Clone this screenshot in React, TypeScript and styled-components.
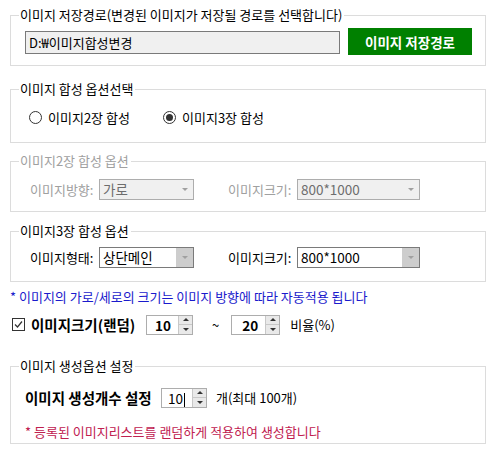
import React from "react"
import styled, { createGlobalStyle } from "styled-components"

const GlobalStyle = createGlobalStyle`
  body {
    margin: 0;
    background: #fff;
    font-family: "Noto Sans CJK KR", "Noto Sans", sans-serif;
    font-size: 13px;
    color: #000;
  }
`

const Page = styled.div`
  width: 493px;
  height: 449px;
  padding: 0 7px 0 10px;
  box-sizing: border-box;
  overflow: hidden;
`

const Group = styled.fieldset<{ $top?: number }>`
  margin: ${(p) => p.$top ?? 0}px 0 0 0;
  padding: 0;
  border: 1px solid #dcdcdc;
  min-width: 0;
`

const GroupBody = styled.div<{ $pt: number; $pb: number; $pl?: number }>`
  padding: ${(p) => p.$pt}px 8px ${(p) => p.$pb}px ${(p) => p.$pl ?? 14}px;
`

const Legend = styled.legend<{ $disabled?: boolean }>`
  margin-left: 8px;
  padding: 0 2px 0 1px;
  height: 16px;
  line-height: 16px;
  color: ${(p) => (p.$disabled ? "#a0a0a0" : "#000")};
`

const Row = styled.div<{ $gap?: number; $top?: number }>`
  display: flex;
  align-items: center;
  gap: ${(p) => p.$gap ?? 0}px;
  margin-top: ${(p) => p.$top ?? 0}px;
`

const PathInput = styled.div`
  width: 315px;
  height: 23px;
  box-sizing: border-box;
  border: 1px solid #7a7a7a;
  background: #f0f0f0;
  padding-left: 3px;
  display: flex;
  align-items: center;
  margin-top: 2px;
`

const GreenButton = styled.button`
  width: 124px;
  height: 27px;
  border: none;
  background: #008000;
  color: #fff;
  font: inherit;
  font-weight: bold;
  font-size: 13.5px;
  padding: 0;
`

const Radio = styled.label<{ $width?: number }>`
  display: flex;
  align-items: center;
  gap: 6px;
  width: ${(p) => p.$width ?? 0}px;
  height: 16px;
`

const RadioDot = styled.span<{ $on?: boolean }>`
  width: 13px;
  height: 13px;
  box-sizing: border-box;
  border: 1px solid #333;
  border-radius: 50%;
  display: flex;
  align-items: center;
  justify-content: center;
  &::after {
    content: "";
    width: 7px;
    height: 7px;
    border-radius: 50%;
    background: ${(p) => (p.$on ? "#333" : "transparent")};
  }
`

const FieldLabel = styled.span<{ $disabled?: boolean; $width: number }>`
  width: ${(p) => p.$width}px;
  flex: none;
  color: ${(p) => (p.$disabled ? "#a0a0a0" : "#000")};
`

const Select = styled.div<{ $disabled?: boolean; $width: number }>`
  width: ${(p) => p.$width}px;
  height: 21px;
  flex: none;
  box-sizing: border-box;
  display: flex;
  border: 1px solid ${(p) => (p.$disabled ? "#adadad" : "#7a7a7a")};
  background: ${(p) => (p.$disabled ? "#f0f0f0" : "#fff")};
  color: ${(p) => (p.$disabled ? "#6d6d6d" : "#000")};
`

const SelectValue = styled.span`
  flex: 1;
  padding-left: 3px;
  line-height: 19px;
  font-size: 13.5px;
`

const SelectArrow = styled.span<{ $disabled?: boolean }>`
  width: 17px;
  display: flex;
  align-items: center;
  justify-content: center;
  background: ${(p) => (p.$disabled ? "transparent" : "#cdcdcd")};
  &::after {
    content: "";
    border-left: 3px solid transparent;
    border-right: 3px solid transparent;
    border-top: 3px solid #a0a0a0;
  }
`

const Note = styled.div<{ $color: string; $top: number }>`
  color: ${(p) => p.$color};
  margin-top: ${(p) => p.$top}px;
  height: 16px;
  line-height: 16px;
`

const Check = styled.span`
  width: 13px;
  height: 13px;
  box-sizing: border-box;
  border: 1px solid #333;
  display: flex;
  align-items: center;
  justify-content: center;
  margin: 0 6px 0 2px;
`

const Bold = styled.span<{ $width: number }>`
  font-weight: bold;
  width: ${(p) => p.$width}px;
  flex: none;
  font-size: 14.5px;
`

const Spin = styled.div<{ $width: number }>`
  width: ${(p) => p.$width}px;
  height: 20px;
  flex: none;
  box-sizing: border-box;
  border: 1px solid #adadad;
  display: flex;
  background: #fff;
`

const SpinValue = styled.span<{ $bold?: boolean }>`
  flex: 1;
  text-align: right;
  padding-right: 7px;
  line-height: 18px;
  font-weight: ${(p) => (p.$bold ? "bold" : "normal")};
  font-size: 13.5px;
`

const SpinButtons = styled.div`
  width: 13px;
  display: flex;
  flex-direction: column;
  background: #e9e9e9;
  border-left: 1px solid #c8c8c8;
`

const SpinBtn = styled.span<{ $up?: boolean }>`
  flex: 1;
  display: flex;
  align-items: center;
  justify-content: center;
  border-bottom: ${(p) => (p.$up ? "1px solid #c8c8c8" : "none")};
  &::after {
    content: "";
    border-left: 3px solid transparent;
    border-right: 3px solid transparent;
    ${(p) => (p.$up ? "border-bottom: 3px solid #333;" : "border-top: 3px solid #333;")}
  }
`

const Caret = styled.span`
  display: inline-block;
  width: 1px;
  height: 14px;
  background: #000;
  vertical-align: middle;
  margin-left: 1px;
`

const Plain = styled.span<{ $ml?: number; $mr?: number }>`
  margin-left: ${(p) => p.$ml ?? 0}px;
  margin-right: ${(p) => p.$mr ?? 0}px;
`

const Spinner: React.FC<{ value: React.ReactNode; width: number; bold?: boolean }> = ({
  value,
  width,
  bold,
}) => (
  <Spin $width={width}>
    <SpinValue $bold={bold}>{value}</SpinValue>
    <SpinButtons>
      <SpinBtn $up />
      <SpinBtn />
    </SpinButtons>
  </Spin>
)

const OptionRow: React.FC<{ disabled?: boolean; label1: string; value1: string }> = ({
  disabled,
  label1,
  value1,
}) => (
  <Row>
    <FieldLabel $disabled={disabled} $width={69}>
      {label1}
    </FieldLabel>
    <Select $disabled={disabled} $width={95}>
      <SelectValue>{value1}</SelectValue>
      <SelectArrow $disabled={disabled} />
    </Select>
    <Plain $ml={34} />
    <FieldLabel $disabled={disabled} $width={69}>
      이미지크기:
    </FieldLabel>
    <Select $disabled={disabled} $width={123}>
      <SelectValue>800*1000</SelectValue>
      <SelectArrow $disabled={disabled} />
    </Select>
  </Row>
)

export default function App() {
  return (
    <Page>
      <GlobalStyle />
      <Group $top={7}>
        <Legend>이미지 저장경로(변경된 이미지가 저장될 경로를 선택합니다)</Legend>
        <GroupBody $pt={5} $pb={10}>
          <Row $gap={8}>
            <PathInput>D:₩이미지합성변경</PathInput>
            <GreenButton>이미지 저장경로</GreenButton>
          </Row>
        </GroupBody>
      </Group>

      <Group $top={15}>
        <Legend>이미지 합성 옵션선택</Legend>
        <GroupBody $pt={12} $pb={17} $pl={18}>
          <Row>
            <Radio $width={134}>
              <RadioDot />
              이미지2장 합성
            </Radio>
            <Radio $width={140}>
              <RadioDot $on />
              이미지3장 합성
            </Radio>
          </Row>
        </GroupBody>
      </Group>

      <Group $top={10}>
        <Legend $disabled>이미지2장 합성 옵션</Legend>
        <GroupBody $pt={10} $pb={11} $pl={19}>
          <OptionRow disabled label1="이미지방향:" value1="가로" />
        </GroupBody>
      </Group>

      <Group $top={11}>
        <Legend>이미지3장 합성 옵션</Legend>
        <GroupBody $pt={8} $pb={13} $pl={19}>
          <OptionRow label1="이미지형태:" value1="상단메인" />
        </GroupBody>
      </Group>

      <Note $color="#1a1acc" $top={7}>
        * 이미지의 가로/세로의 크기는 이미지 방향에 따라 자동적용 됩니다
      </Note>

      <Row $top={9}>
        <Check>
          <svg width="11" height="11" viewBox="0 0 11 11">
            <path d="M2 5.5 L4.5 8 L9 2.5" fill="none" stroke="#333" strokeWidth="1.2" />
          </svg>
        </Check>
        <Bold $width={115}>이미지크기(랜덤)</Bold>
        <Spinner value="10" width={47} bold />
        <Plain $ml={19} $mr={12}>
          ~
        </Plain>
        <Spinner value="20" width={49} bold />
        <Plain $ml={10}>비율(%)</Plain>
      </Row>

      <Group $top={23}>
        <Legend>이미지 생성옵션 설정</Legend>
        <GroupBody $pt={13} $pb={3}>
          <Row>
            <Bold $width={136}>이미지 생성개수 설정</Bold>
            <Spinner
              width={46}
              value={
                <>
                  10
                  <Caret />
                </>
              }
            />
            <Plain $ml={9}>개(최대 100개)</Plain>
          </Row>
          <Note $color="#c0204f" $top={16}>
            * 등록된 이미지리스트를 랜덤하게 적용하여 생성합니다
          </Note>
        </GroupBody>
      </Group>
    </Page>
  )
}
